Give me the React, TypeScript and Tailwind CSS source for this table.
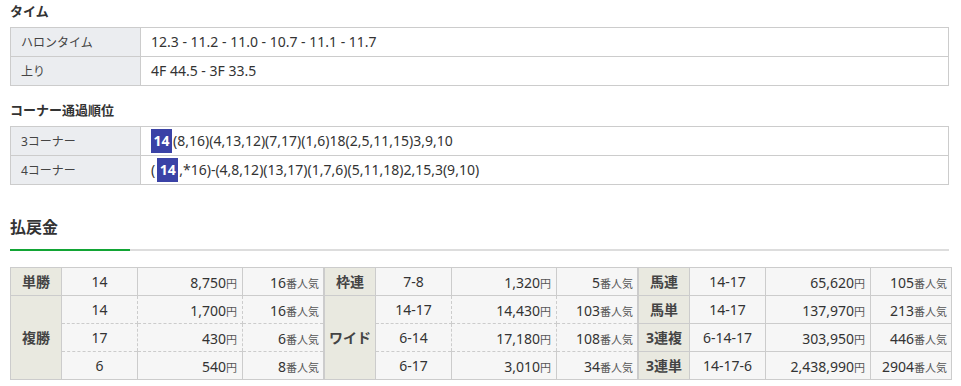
import React from "react";

const font = { fontFamily: '"Noto Sans", "Noto Sans CJK JP", sans-serif' };

function Badge({ n }: { n: string }) {
  return (
    <span className="inline-flex h-[24px] w-[21px] items-center justify-center bg-[#3a42a6] text-[14px] font-bold text-white align-middle">
      {n}
    </span>
  );
}

function InfoTable({ rows }: { rows: [string, React.ReactNode][] }) {
  return (
    <table className="w-[939px] border-collapse border border-[#cccccc] text-[14px] text-[#333]">
      <tbody>
        {rows.map(([k, v], i) => (
          <tr key={i} className="h-[29px] border-b border-[#cccccc]">
            <td className="w-[130px] border-r border-[#cccccc] bg-[#ebedf0] pl-[10px] pt-[1px] text-[12px] text-[#444]">{k}</td>
            <td className="bg-white pb-[1px] pl-[10px]">{v}</td>
          </tr>
        ))}
      </tbody>
    </table>
  );
}

type Row = { num: string; amt: string; ninki: string };

function Amount({ v }: { v: string }) {
  return (
    <>
      <span className="text-[14px]">{v}</span>
      <span className="text-[11px] text-[#555]">円</span>
    </>
  );
}
function Ninki({ v }: { v: string }) {
  return (
    <>
      <span className="text-[14px]">{v}</span>
      <span className="text-[11px] text-[#555]">番人気</span>
    </>
  );
}

function PayBlock({ groups }: { groups: { label: string; rows: Row[] }[] }) {
  return (
    <table className="w-[313px] table-fixed border-collapse border border-[#cccccc] text-[#333]">
      <colgroup>
        <col className="w-[51px]" />
        <col className="w-[76px]" />
        <col className="w-[105px]" />
        <col className="w-[81px]" />
      </colgroup>
      <tbody>
        {groups.map((g, gi) =>
          g.rows.map((r, ri) => {
            const last = ri === g.rows.length - 1;
            const bb = last ? "border-b border-solid border-[#cccccc]" : "border-b border-dashed border-[#cccccc]";
            return (
              <tr key={gi + "-" + ri} className="h-[28px]">
                {ri === 0 && (
                  <td
                    rowSpan={g.rows.length}
                    className="border border-[#cccccc] bg-[#e9e9e0] text-center text-[14px] font-bold text-[#444]"
                  >
                    {g.label}
                  </td>
                )}
                <td className={`${bb} border-r border-r-[#cccccc] bg-[#f6f6f6] text-center text-[14px]`}>{r.num}</td>
                <td className={`${bb} border-r border-r-[#cccccc] bg-[#f6f6f6] pr-[5px] text-right`}>
                  <Amount v={r.amt} />
                </td>
                <td className={`${bb} bg-[#f6f6f6] pr-[4px] text-right`}>
                  <Ninki v={r.ninki} />
                </td>
              </tr>
            );
          })
        )}
      </tbody>
    </table>
  );
}

export default function App() {
  return (
    <div className="w-[961px] bg-white pl-[10px] text-[#333]" style={font}>
      <div className="h-[27px] text-[13px] font-bold leading-[23px] text-[#333]">タイム</div>
      <InfoTable
        rows={[
          ["ハロンタイム", "12.3 - 11.2 - 11.0 - 10.7 - 11.1 - 11.7"],
          ["上り", "4F 44.5 - 3F 33.5"],
        ]}
      />
      <div className="h-[40px] pt-[14px] text-[13px] font-bold leading-[20px]">コーナー通過順位</div>
      <InfoTable
        rows={[
          [
            "3コーナー",
            <span className="flex items-center">
              <Badge n="14" />
              <span className="ml-[1px]">(8,16)(4,13,12)(7,17)(1,6)18(2,5,11,15)3,9,10</span>
            </span>,
          ],
          [
            "4コーナー",
            <span className="flex items-center">
              <span className="mr-[2px]">(</span>
              <Badge n="14" />
              <span className="ml-[1px]">,*16)-(4,8,12)(13,17)(1,7,6)(5,11,18)2,15,3(9,10)</span>
            </span>,
          ],
        ]}
      />
      <div className="mt-[30px] w-[939px]">
        <div className="text-[16px] font-bold leading-[24px] text-[#333]">払戻金</div>
        <div className="mt-[10px] flex h-[2px] bg-[#dddddd]">
          <div className="h-[2px] w-[120px] bg-[#12a535]" />
        </div>
      </div>
      <div className="mt-[16px] flex">
        <PayBlock
          groups={[
            { label: "単勝", rows: [{ num: "14", amt: "8,750", ninki: "16" }] },
            {
              label: "複勝",
              rows: [
                { num: "14", amt: "1,700", ninki: "16" },
                { num: "17", amt: "430", ninki: "6" },
                { num: "6", amt: "540", ninki: "8" },
              ],
            },
          ]}
        />
        <PayBlock
          groups={[
            { label: "枠連", rows: [{ num: "7-8", amt: "1,320", ninki: "5" }] },
            {
              label: "ワイド",
              rows: [
                { num: "14-17", amt: "14,430", ninki: "103" },
                { num: "6-14", amt: "17,180", ninki: "108" },
                { num: "6-17", amt: "3,010", ninki: "34" },
              ],
            },
          ]}
        />
        <PayBlock
          groups={[
            { label: "馬連", rows: [{ num: "14-17", amt: "65,620", ninki: "105" }] },
            { label: "馬単", rows: [{ num: "14-17", amt: "137,970", ninki: "213" }] },
            { label: "3連複", rows: [{ num: "6-14-17", amt: "303,950", ninki: "446" }] },
            { label: "3連単", rows: [{ num: "14-17-6", amt: "2,438,990", ninki: "2904" }] },
          ]}
        />
      </div>
    </div>
  );
}
